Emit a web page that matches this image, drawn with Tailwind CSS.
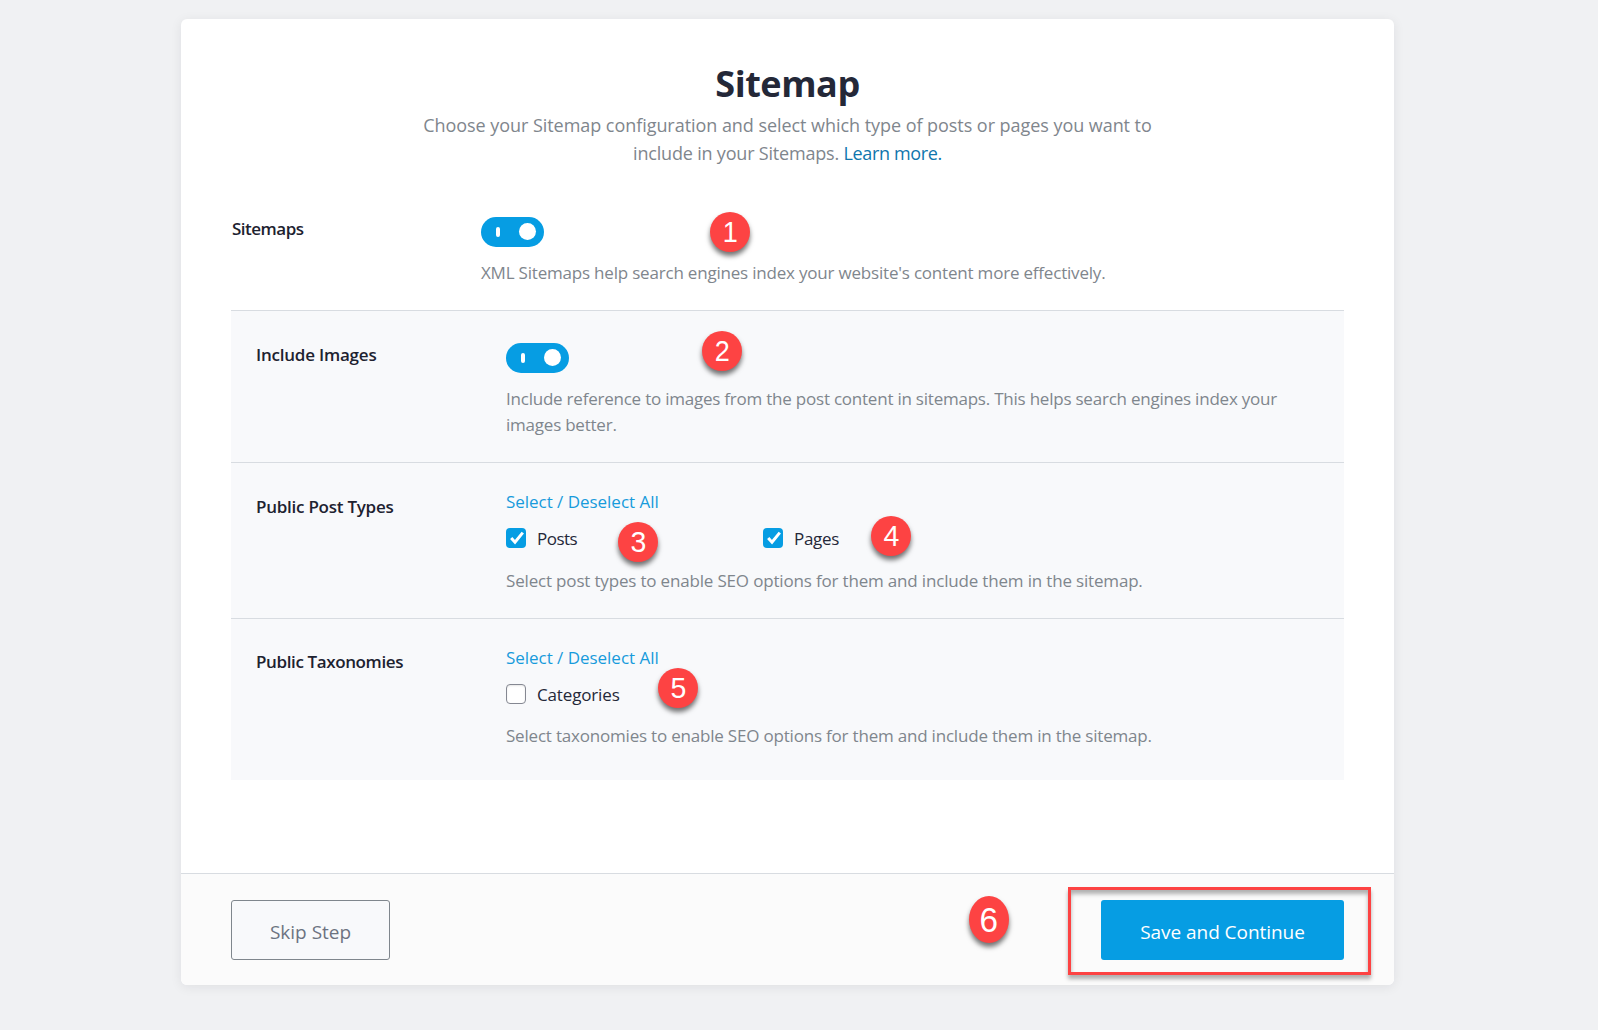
<!DOCTYPE html>
<html lang="en">
<head>
<meta charset="utf-8">
<title>Sitemap</title>
<script src="https://cdn.jsdelivr.net/npm/@tailwindcss/browser@4"></script>
</head>
<body class="relative h-[1030px] overflow-hidden bg-[#f0f1f3] pt-[19px] pl-[181px] font-['Open_Sans',sans-serif] text-[17px] leading-[26px] tracking-[-0.2px] text-[#7f868d]">

<main class="flex h-[966px] w-[1213px] flex-col overflow-hidden rounded-md bg-white shadow-[0_2px_12px_rgba(26,30,35,0.08)]">
  <header class="pt-[45px] text-center">
    <h1 class="text-[36px] leading-10 font-bold tracking-[-0.45px] text-[#242838]">Sitemap</h1>
    <p class="mt-[7px] text-[18px] leading-7 tracking-[-0.05px]">Choose your Sitemap configuration and select which type of posts or pages you want to<br><span class="tracking-[-0.19px]">include in your Sitemaps. <a class="tracking-[-0.35px] text-[#0f76ad]">Learn more.</a></span></p>
  </header>

  <section class="mx-[50px] mt-[49px] flex pb-6">
    <h2 class="w-[250px] pl-px font-semibold tracking-[-0.5px] text-[#1d2230]">Sitemaps</h2>
    <div>
      <div class="mt-px flex h-[30px] w-[63px] items-center justify-between rounded-full bg-[#069de3] pr-2 pl-[15px]">
        <span class="h-2.5 w-1 rounded-sm bg-white"></span><span class="mb-px size-[17px] rounded-full bg-white"></span>
      </div>
      <p class="mt-[13px]">XML Sitemaps help search engines index your website's content more effectively.</p>
    </div>
  </section>

  <div class="mx-[50px] bg-[#f8f9fb]">
    <section class="flex border-t border-[#d8dce1] px-[25px] pt-[31px] pb-6">
      <h2 class="w-[250px] font-semibold tracking-[-0.22px] text-[#1d2230]">Include Images</h2>
      <div>
        <div class="mt-px flex h-[30px] w-[63px] items-center justify-between rounded-full bg-[#069de3] pr-2 pl-[15px]">
          <span class="h-2.5 w-1 rounded-sm bg-white"></span><span class="mb-px size-[17px] rounded-full bg-white"></span>
        </div>
        <p class="mt-[13px] tracking-[-0.225px]">Include reference to images from the post content in sitemaps. This helps search engines index your<br>images better.</p>
      </div>
    </section>

    <section class="flex border-t border-[#d8dce1] px-[25px] pt-[26px] pb-6">
      <h2 class="mt-[5px] w-[250px] font-semibold tracking-[-0.25px] text-[#1d2230]">Public Post Types</h2>
      <div>
        <a class="block tracking-[-0.03px] text-[#179bdc]">Select / Deselect All</a>
        <div class="mt-[11px] flex text-[#242838]">
          <label class="flex w-[257px] items-center tracking-[-0.5px]">
            <span class="mr-[11px] mb-0.5 flex size-5 items-center justify-center rounded bg-[#069de3]"><svg class="size-5" viewBox="0 0 20 20" fill="none" stroke="#fff" stroke-width="3"><path d="M5.2 10 9 14.2 16.8 4.6"/></svg></span>Posts</label>
          <label class="flex items-center tracking-[-0.3px]">
            <span class="mr-[11px] mb-0.5 flex size-5 items-center justify-center rounded bg-[#069de3]"><svg class="size-5" viewBox="0 0 20 20" fill="none" stroke="#fff" stroke-width="3"><path d="M5.2 10 9 14.2 16.8 4.6"/></svg></span>Pages</label>
        </div>
        <p class="mt-4 tracking-[-0.175px]">Select post types to enable SEO options for them and include them in the sitemap.</p>
      </div>
    </section>

    <section class="flex border-t border-[#d8dce1] px-[25px] pt-[26px] pb-[31px]">
      <h2 class="mt-1 w-[250px] font-semibold tracking-[-0.38px] text-[#1d2230]">Public Taxonomies</h2>
      <div>
        <a class="block tracking-[-0.03px] text-[#179bdc]">Select / Deselect All</a>
        <label class="mt-[11px] flex items-center tracking-[-0.15px] text-[#242838]">
          <span class="mr-[11px] mb-0.5 size-5 rounded border border-[#858892] bg-white shadow-[inset_0_1px_2px_rgba(0,0,0,0.1)]"></span>Categories</label>
        <p class="mt-[15px]">Select taxonomies to enable SEO options for them and include them in the sitemap.</p>
      </div>
    </section>
  </div>

  <footer class="mt-auto flex h-28 items-start justify-between border-t border-[#d8dce1] bg-[#fbfbfb] px-[50px] pt-[26px] text-[19px] tracking-normal">
    <button class="h-[60px] w-[159px] rounded-[3px] border border-[#7f868d] bg-[#f8f9fb] pt-1 text-[#6c7381]">Skip Step</button>
    <button class="h-[60px] w-[243px] rounded-[3px] bg-[#069de3] pt-1 text-white tracking-[-0.05px]">Save and Continue</button>
  </footer>
</main>

<!-- numbered callouts and highlight frame over the form -->
<div class="font-['Liberation_Sans',sans-serif] text-[30px] leading-10 tracking-normal text-white">
  <span class="absolute top-[212px] left-[710px] flex size-10 justify-center rounded-full bg-[#fd4343] shadow-[0_4px_5px_rgba(0,0,0,0.55)]"><b class="scale-x-90 font-normal">1</b></span>
  <span class="absolute top-[331px] left-[702px] flex size-10 justify-center rounded-full bg-[#fd4343] shadow-[0_4px_5px_rgba(0,0,0,0.55)]"><b class="scale-x-90 font-normal">2</b></span>
  <span class="absolute top-[522px] left-[618px] flex size-10 justify-center rounded-full bg-[#fd4343] shadow-[0_4px_5px_rgba(0,0,0,0.55)]"><b class="scale-x-95 font-normal">3</b></span>
  <span class="absolute top-[516px] left-[871px] flex size-10 justify-center rounded-full bg-[#fd4343] shadow-[0_4px_5px_rgba(0,0,0,0.55)]"><b class="scale-x-95 font-normal">4</b></span>
  <span class="absolute top-[668px] left-[658px] flex size-10 justify-center rounded-full bg-[#fd4343] shadow-[0_4px_5px_rgba(0,0,0,0.55)]"><b class="scale-x-95 font-normal">5</b></span>
  <span class="absolute top-[896px] left-[969px] flex h-[47px] w-10 justify-center rounded-[50%] bg-[#fd4343] text-[35px] leading-[47px] shadow-[0_4px_5px_rgba(0,0,0,0.55)]"><b class="scale-x-95 font-normal">6</b></span>
</div>
<div class="absolute top-[887px] left-[1068px] h-[88px] w-[303px] border-3 border-[#fd4343] shadow-[0_4px_4px_rgba(0,0,0,0.3),inset_0_4px_4px_rgba(0,0,0,0.3)]"></div>
</body>
</html>
